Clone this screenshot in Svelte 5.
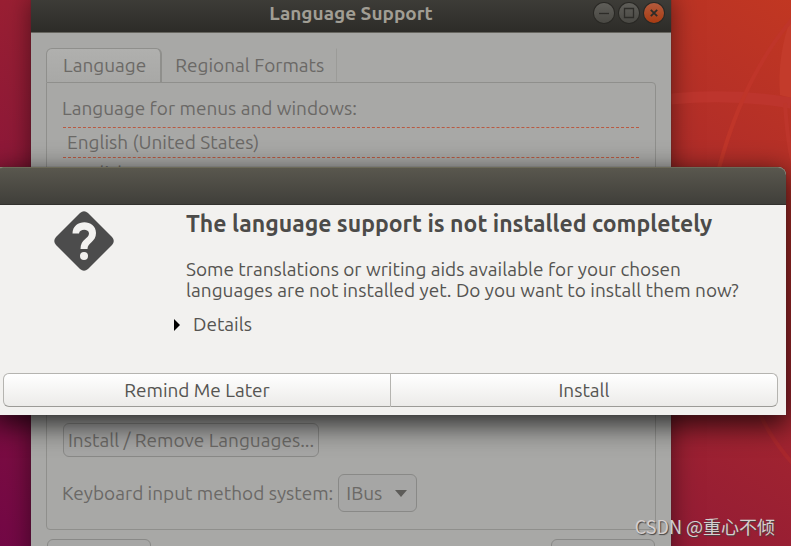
<script lang="ts">
  let languages: Array<string> = ["English (United States)", "English"];
  let inputMethods: Array<string> = ["IBus"];
  let inputMethod = "IBus";
  let selected = 0;
  let showDetails = false;
</script>

<div class="desktop">
  <svg class="wallpaper" viewBox="671 0 120 546" fill="none" aria-hidden="true">
    <path d="M791 18 Q777 55 780 95 L791 98Z" fill="#c33b2b" />
    <path d="M671 99 Q732 93 791 103" stroke="#bd352d" stroke-width="11" />
    <path d="M795 16 Q744 74 719 168" stroke="#bf3529" stroke-width="4" />
    <path d="M785 103 Q788 150 795 170" stroke="#bd352b" stroke-width="4" />
    <path d="M758 410 Q771 440 795 466" stroke="#a9272d" stroke-width="4" />
  </svg>

  <main class="window">
    <header class="titlebar">
      <h1>Language Support</h1>
      <div class="controls">
        <button aria-label="Minimize">
          <svg viewBox="0 0 20 20"><path d="M5 10.5h10" /></svg>
        </button>
        <button aria-label="Maximize">
          <svg viewBox="0 0 20 20"><path d="M5.5 5.5h9v9h-9z" /></svg>
        </button>
        <button class="close" aria-label="Close">
          <svg viewBox="0 0 20 20"><path d="M6.8 6.8l6.4 6.4M13.2 6.8l-6.4 6.4" /></svg>
        </button>
      </div>
    </header>

    <div class="content">
      <div class="tabs" role="tablist">
        <button class="tab active" role="tab" aria-selected="true">Language</button>
        <button class="tab" role="tab" aria-selected="false">Regional Formats</button>
      </div>
      <section class="panel">
        <p id="menus-label">Language for menus and windows:</p>
        <div class="languages" role="listbox" aria-labelledby="menus-label">
          {#each languages as language, i}
            <button class="language" class:focused={i == selected} role="option" aria-selected={i == selected} on:click={() => selected = i}>
              {language}
            </button>
          {/each}
        </div>
        <button class="btn install-languages">Install / Remove Languages...</button>
        <div class="input-method">
          <label for="input-method">Keyboard input method system:</label>
          <div class="select">
            <select id="input-method" bind:value={inputMethod}>
              {#each inputMethods as method}
                <option>{method}</option>
              {/each}
            </select>
            <svg viewBox="0 0 12 7" aria-hidden="true"><path d="M0 0h12L6 7z" /></svg>
          </div>
        </div>
      </section>
      <footer class="actions">
        <button class="btn" aria-label="Help"></button>
        <button class="btn" aria-label="Close"></button>
      </footer>
    </div>
  </main>

  <div class="dialog" role="alertdialog" aria-labelledby="dialog-title">
    <div class="dialog-titlebar"></div>
    <div class="dialog-body">
      <svg class="question" viewBox="0 0 60 60" aria-hidden="true">
        <path class="diamond" d="M26 2Q30-1.500 34 2L58 26Q61.500 30 58 34L34 58Q30 61.500 26 58L2 34Q-1.500 30 2 26Z" />
        <path class="hook" d="M18.500 22.500H25C25.500 17.500 35 17.500 35 22.500C35 27.500 26.500 28 26.500 38H33.500C33.500 31.500 42 31 42 22C42 7.500 18.500 7.500 18.500 22.500Z" />
        <circle cx="30" cy="45" r="4" />
      </svg>
      <div class="message">
        <h2 id="dialog-title">The language support is not installed completely</h2>
        <p>Some translations or writing aids available for your chosen<br />languages are not installed yet. Do you want to install them now?</p>
        <button class="details" aria-expanded={showDetails} on:click={() => showDetails = !showDetails}>
          <svg viewBox="0 0 6 12" aria-hidden="true"><path d="M0 0l6 6-6 6z" /></svg>
          Details
        </button>
      </div>
    </div>
    <div class="dialog-actions">
      <button>Remind Me Later</button>
      <button>Install</button>
    </div>
  </div>

  <span class="watermark">CSDN @重心不倾</span>
</div>

<style>
  :global(body) {
    margin: 0;
  }
  .desktop {
    position: relative;
    height: 100vh;
    overflow: hidden;
    background: linear-gradient(to top right, #730846 0%, #991f33 50%, #c13722 100%);
    font-family: "Ubuntu", "Noto Sans", sans-serif;
    font-size: 19px;
    line-height: 21px;
    color: #6b6966;
  }
  button, select {
    font: inherit;
    color: inherit;
    margin: 0;
    padding: 0;
    border: none;
    background: none;
  }
  h1, h2, p {
    margin: 0;
  }
  .wallpaper {
    position: absolute;
    top: 0;
    right: 0;
    width: 120px;
  }

  .window {
    position: absolute;
    top: -6px;
    left: 31px;
    right: 120px;
    background: #a8a8a6;
    box-shadow: 0 0 1px #333, 0 4px 24px rgba(0, 0, 0, .5);
  }
  .titlebar {
    display: grid;
    grid-template-columns: 1fr auto 1fr;
    align-items: center;
    height: 39px;
    background: linear-gradient(#403f3a, #2d2c28);
    border-bottom: 1px solid #66655f;
    box-sizing: border-box;
  }
  h1 {
    grid-column: 2;
    font-size: 19px;
    line-height: 24px;
    color: #a19e94;
  }
  .controls {
    display: flex;
    justify-content: flex-end;
    gap: 5px;
    padding-right: 7px;
  }
  .controls button {
    width: 20px;
    height: 20px;
    border-radius: 50%;
    background: linear-gradient(#5f5e59, #494843);
    box-shadow: 0 0 0 1px #292824;
  }
  .controls svg {
    display: block;
    fill: none;
    stroke: #2d2c28;
    stroke-width: 1.3;
  }
  .controls .close {
    background: linear-gradient(#b35a3c, #a83b12);
  }
  .controls .close svg {
    stroke-width: 1.8;
  }

  .content {
    padding: 15px 15px 16px;
  }
  .tabs {
    display: flex;
  }
  .tab {
    height: 34px;
    padding: 0 12px;
    border: 1px solid transparent;
    border-right-color: #9b9b98;
  }
  .tab.active {
    border: 1px solid #8f8f8c;
    border-bottom: none;
    border-right-width: 2px;
    border-radius: 6px 6px 0 0;
    padding: 0 14px 0 16px;
    background: linear-gradient(#b0b0ae, #a8a8a6);
  }
  .panel {
    padding: 15px 15px 17px;
    border: 1px solid #8f8f8c;
    border-radius: 0 4px 4px 4px;
  }
  .languages {
    display: flex;
    flex-direction: column;
    min-height: 296px;
    padding: 8px 1px 0;
  }
  .language {
    height: 30px;
    padding: 0 4px;
    text-align: left;
  }
  .language.focused {
    height: 31px;
    border-top: 1px dashed #b85a42;
    border-bottom: 1px dashed #b85a42;
  }
  .btn {
    border: 1px solid #898987;
    border-radius: 6px;
    background: #a6a6a5;
  }
  .install-languages {
    height: 34px;
    margin-left: 1px;
    padding: 0 4px;
  }
  .input-method {
    display: flex;
    align-items: center;
    gap: 5px;
    margin-top: 17px;
  }
  .select {
    position: relative;
  }
  select {
    appearance: none;
    height: 38px;
    padding: 0 33px 0 7px;
    border: 1px solid #898987;
    border-radius: 6px;
    background: #a6a6a5;
  }
  .select svg {
    position: absolute;
    top: 16px;
    right: 10px;
    width: 12px;
    fill: #5d5c59;
    pointer-events: none;
  }
  .actions {
    display: flex;
    justify-content: space-between;
    padding: 9px 1px 0;
  }
  .actions .btn {
    width: 104px;
    height: 34px;
  }

  .dialog {
    position: absolute;
    top: 167px;
    left: -5px;
    right: 5px;
    border-radius: 8px 8px 0 0;
    background: #f2f1ef;
    color: #555451;
    box-shadow: 0 0 1px #333, 0 8px 28px 2px rgba(0, 0, 0, .75);
  }
  .dialog-titlebar {
    height: 38px;
    box-sizing: border-box;
    border-top: 1px solid #6c6a58;
    border-bottom: 1px solid #33322e;
    border-radius: 8px 8px 0 0;
    background: linear-gradient(#59574e, #403f3a);
  }
  .dialog-body {
    display: flex;
    gap: 60px;
    padding: 6px 12px 0 59px;
  }
  .question {
    flex: none;
    width: 60px;
    height: 60px;
  }
  .diamond {
    fill: #4c4c4c;
  }
  .hook, .question circle {
    fill: #f2f1ef;
  }
  .message {
    padding-left: 12px;
  }
  h2 {
    font-size: 23px;
    line-height: 26px;
    color: #4c4b49;
    white-space: nowrap;
  }
  .message p {
    margin-top: 22px;
    white-space: nowrap;
  }
  .details {
    display: flex;
    align-items: center;
    gap: 13px;
    margin: 13px 0 0 -12px;
  }
  .details svg {
    width: 6px;
    height: 12px;
    fill: #000;
  }
  .dialog-actions {
    display: flex;
    margin: 38px 8px 0;
    padding-bottom: 8px;
  }
  .dialog-actions button {
    flex: 1;
    height: 34px;
    border: 1px solid #b5b4b0;
    border-bottom-color: #9c9b97;
    border-radius: 6px 0 0 6px;
    background: linear-gradient(#fff, #ecebe9);
  }
  .dialog-actions button + button {
    border-left: none;
    border-radius: 0 6px 6px 0;
  }

  .watermark {
    position: absolute;
    right: 16px;
    bottom: 7px;
    font-family: "Noto Sans CJK SC", sans-serif;
    font-size: 18px;
    line-height: 26px;
    color: #d5cfcf;
    text-shadow: 1px 1px 1px #444;
  }
</style>
